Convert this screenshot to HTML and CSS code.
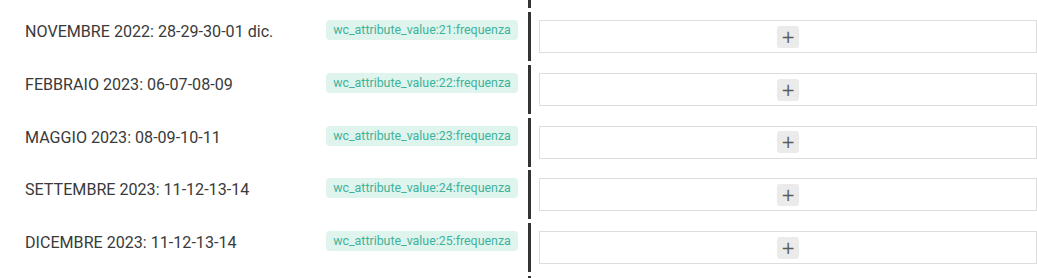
FILE: index.html
```html
<!DOCTYPE html>
<html>
<head>
  <title>Frequenze</title>
  <link rel="stylesheet" href="styles.css">
</head>
<body>

  <div class="lista">
    <!-- riga precedente, solo la fine si vede -->
    <div class="riga riga-prec">
      <div class="etichetta"></div>
      <div class="chiave-cella"></div>
      <div class="valore"><div class="campo"></div></div>
    </div>

    <div class="riga">
      <div class="etichetta">NOVEMBRE 2022: 28-29-30-01 dic.</div>
      <div class="chiave-cella"><span class="chiave">wc_attribute_value:21:frequenza</span></div>
      <div class="valore"><div class="campo"><button class="aggiungi">+</button></div></div>
    </div>

    <div class="riga">
      <div class="etichetta">FEBBRAIO 2023: 06-07-08-09</div>
      <div class="chiave-cella"><span class="chiave">wc_attribute_value:22:frequenza</span></div>
      <div class="valore"><div class="campo"><button class="aggiungi">+</button></div></div>
    </div>

    <div class="riga">
      <div class="etichetta">MAGGIO 2023: 08-09-10-11</div>
      <div class="chiave-cella"><span class="chiave">wc_attribute_value:23:frequenza</span></div>
      <div class="valore"><div class="campo"><button class="aggiungi">+</button></div></div>
    </div>

    <div class="riga">
      <div class="etichetta">SETTEMBRE 2023: 11-12-13-14</div>
      <div class="chiave-cella"><span class="chiave">wc_attribute_value:24:frequenza</span></div>
      <div class="valore"><div class="campo"><button class="aggiungi">+</button></div></div>
    </div>

    <div class="riga">
      <div class="etichetta">DICEMBRE 2023: 11-12-13-14</div>
      <div class="chiave-cella"><span class="chiave">wc_attribute_value:25:frequenza</span></div>
      <div class="valore"><div class="campo"><button class="aggiungi">+</button></div></div>
    </div>

    <!-- riga successiva, appena visibile -->
    <div class="riga">
      <div class="etichetta"></div>
      <div class="chiave-cella"></div>
      <div class="valore"></div>
    </div>
  </div>

</body>
</html>
```

FILE: styles.css
```css
html, body {
  height: 278px;
}

body {
  margin: 0;
  font-family: Roboto, Arial, sans-serif;
  color: #333;
  background: #fff;
  overflow: hidden;
}

.lista {
  display: flex;
  flex-direction: column;
  gap: 3.7px;
  margin-top: -46.3px;
}

.riga {
  display: grid;
  grid-template-columns: 326px 192px 1fr;
  height: 49px;
}

.riga-prec {
  margin-bottom: 6px;
}

.riga-prec .valore {
  padding-top: 13px;
}

.etichetta {
  padding: 10px 0 0 25px;
  font-size: 16.1px;
  line-height: 20px;
  color: #3a3a3a;
  white-space: nowrap;
}

.chiave-cella {
  padding-top: 8px;
}

.chiave {
  display: block;
  background-color: #e0f4ee;
  color: #3cb39a;
  font-size: 12.4px;
  line-height: 20px;
  height: 20px;
  text-align: center;
  border-radius: 4px;
  white-space: nowrap;
}

.valore {
  margin-left: 10px;
  border-left: 3px solid #333;
  padding: 8px 0 8px 8px;
}

.campo {
  box-sizing: border-box;
  height: 33px;
  border: 1px solid #ddd;
  display: flex;
  align-items: center;
  justify-content: center;
}

.aggiungi {
  width: 22px;
  height: 22px;
  padding: 0;
  border: none;
  border-radius: 3px;
  background-color: #ebebeb;
  color: #5a5a5a;
  font-family: "DejaVu Sans", sans-serif;
  font-size: 17px;
  line-height: 22px;
  cursor: pointer;
}
```
